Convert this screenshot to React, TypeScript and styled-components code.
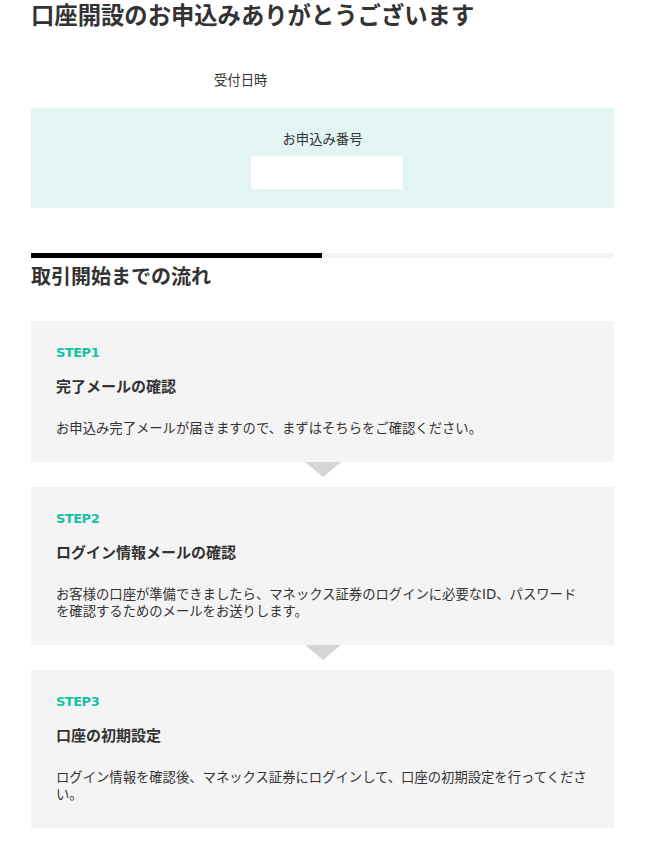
import React from 'react'
import styled, { createGlobalStyle } from 'styled-components'

const GlobalStyle = createGlobalStyle`
  html, body {
    margin: 0;
    padding: 0;
    background: #fff;
  }
  body {
    font-family: 'DejaVu Sans', 'Noto Sans CJK JP', sans-serif;
    font-size: 13.33px;
    color: #333;
  }
`

const steps = [
  {
    label: 'STEP1',
    title: '完了メールの確認',
    text: 'お申込み完了メールが届きますので、まずはそちらをご確認ください。',
  },
  {
    label: 'STEP2',
    title: 'ログイン情報メールの確認',
    text: 'お客様の口座が準備できましたら、マネックス証券のログインに必要なID、パスワードを確認するためのメールをお送りします。',
  },
  {
    label: 'STEP3',
    title: '口座の初期設定',
    text: 'ログイン情報を確認後、マネックス証券にログインして、口座の初期設定を行ってください。',
  },
]

const App = () => {
  return (
    <>
      <GlobalStyle />
      <Page>
        <PageTitle>口座開設のお申込みありがとうございます</PageTitle>
        <ReceiptRow>受付日時</ReceiptRow>
        <NumberBox>
          <NumberLabel>お申込み番号</NumberLabel>
          <NumberValue />
        </NumberBox>
        <SectionBar />
        <SectionTitle>取引開始までの流れ</SectionTitle>
        <StepList>
          {steps.map((step, index) => (
            <StepCard key={step.label} $arrow={index < steps.length - 1}>
              <StepLabel>{step.label}</StepLabel>
              <StepTitle>{step.title}</StepTitle>
              <StepText>{step.text}</StepText>
            </StepCard>
          ))}
        </StepList>
      </Page>
    </>
  )
}

const Page = styled.div`
  width: 583px;
  margin-left: 31px;
  padding-top: 1px;
  padding-bottom: 16px;
`

const PageTitle = styled.h1`
  margin: 0;
  font-family: 'Noto Sans CJK JP', sans-serif;
  font-size: 23.33px;
  font-weight: 700;
  line-height: 26px;
  color: #333;
  white-space: nowrap;
`

const ReceiptRow = styled.div`
  margin-top: 43px;
  padding-left: 183px;
  font-family: 'Noto Sans CJK JP', sans-serif;
  line-height: 20px;
`

const NumberBox = styled.div`
  margin-top: 18px;
  background: #e3f5f3;
  padding: 21px 0 19px;
  display: flex;
  flex-direction: column;
  align-items: center;
`

const NumberLabel = styled.div`
  font-family: 'Noto Sans CJK JP', sans-serif;
  line-height: 20px;
`

const NumberValue = styled.div`
  margin: 7px 0 0 9px;
  width: 152px;
  height: 33px;
  background: #fff;
`

const SectionBar = styled.div`
  margin-top: 45px;
  height: 5px;
  background: #f4f4f4;
  position: relative;
  &::before {
    content: '';
    position: absolute;
    left: 0;
    top: 0;
    bottom: 0;
    width: 291px;
    background: #000;
  }
`

const SectionTitle = styled.h2`
  margin: 4px 0 0;
  font-family: 'Noto Sans CJK JP', sans-serif;
  font-size: 20px;
  font-weight: 700;
  line-height: 28px;
  color: #333;
`

const StepList = styled.div`
  margin-top: 31px;
  display: flex;
  flex-direction: column;
  gap: 25px;
`

const StepCard = styled.div<{ $arrow?: boolean }>`
  position: relative;
  background: #f4f4f4;
  padding: 22px 24.5px 25px 25px;
  &::after {
    content: '';
    display: ${({ $arrow }) => ($arrow ? 'block' : 'none')};
    position: absolute;
    left: 50%;
    top: 100%;
    margin-left: -18px;
    border-left: 18px solid transparent;
    border-right: 18px solid transparent;
    border-top: 15px solid #d5d5d5;
  }
`

const StepLabel = styled.div`
  font-family: 'DejaVu Sans', sans-serif;
  font-size: 13px;
  font-weight: 700;
  letter-spacing: -0.5px;
  line-height: 20px;
  color: #12c3a3;
`

const StepTitle = styled.h3`
  margin: 13px 0 0;
  font-family: 'Noto Sans CJK JP', sans-serif;
  font-size: 15px;
  font-weight: 700;
  line-height: 20px;
  color: #333;
`

const StepText = styled.p`
  margin: 24px 0 0;
  line-height: 17px;
`

export default App
